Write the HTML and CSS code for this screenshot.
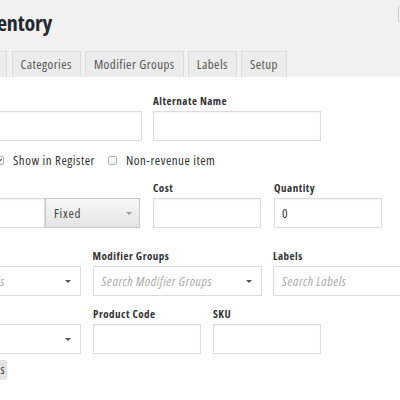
FILE: index.html
```html
<!DOCTYPE html>
<html>
<head>
<meta charset="utf-8">
<title>Inventory</title>
<link rel="stylesheet" href="styles.css">
</head>
<body>
<div class="page">
  <header class="head">
    <div class="head-row">
      <h1 class="title">Inventory</h1>
      <a class="head-btn">Add Item</a>
    </div>
    <nav class="tabs">
      <a class="tab tab-first">Details</a>
      <a class="tab">Categories</a>
      <a class="tab">Modifier Groups</a>
      <a class="tab">Labels</a>
      <a class="tab">Setup</a>
    </nav>
  </header>
  <main class="form">
    <div class="row row-name">
      <div class="field"><label class="lbl">Name</label><div class="input"></div></div>
      <div class="field"><label class="lbl">Alternate Name</label><div class="input"></div></div>
    </div>
    <div class="checks">
      <span class="check"><span class="box">
        <svg viewBox="0 0 10 10" width="9" height="9"><path d="M2 5.2 L4.2 7.3 L8 2.6" fill="none" stroke="#555" stroke-width="1.6"/></svg>
      </span>Show in Register</span>
      <span class="check"><span class="box"></span>Non-revenue item</span>
    </div>
    <div class="row row-price">
      <div class="field">
        <label class="lbl">Price</label>
        <div class="combo">
          <div class="input combo-input"></div>
          <div class="sel-fixed"><span>Fixed</span><span class="arrow arrow-light"></span></div>
        </div>
      </div>
      <div class="field"><label class="lbl">Cost</label><div class="input"></div></div>
      <div class="field"><label class="lbl">Quantity</label><div class="input value">0</div></div>
    </div>
    <div class="row row-groups">
      <div class="field"><label class="lbl">Categories</label><div class="sel"><span class="ph">Search Categories</span><span class="arrow"></span></div></div>
      <div class="field"><label class="lbl">Modifier Groups</label><div class="sel"><span class="ph">Search Modifier Groups</span><span class="arrow"></span></div></div>
      <div class="field"><label class="lbl">Labels</label><div class="sel"><span class="ph">Search Labels</span><span class="arrow"></span></div></div>
    </div>
    <div class="row row-codes">
      <div class="field"><label class="lbl">Tax</label><div class="sel"><span class="ph"></span><span class="arrow"></span></div></div>
      <div class="field"><label class="lbl">Product Code</label><div class="input"></div></div>
      <div class="field"><label class="lbl">SKU</label><div class="input"></div></div>
    </div>
    <div class="more">More Options</div>
  </main>
</div>
</body>
</html>
```
FILE: styles.css
```css
html, body {
  margin: 0;
  height: 400px;
  overflow: hidden;
  background: #fff;
}
body {
  font-family: "Open Sans", "DejaVu Sans", sans-serif;
  font-stretch: 75%;
  letter-spacing: 0.5px;
  color: #333;
}
.page {
  margin-left: -88px;
  width: 488px;
}
.head {
  background: #f1f1f1;
  padding: 8px 0 0 42px;
}
.head-row {
  display: flex;
  align-items: flex-start;
  padding-left: 17px;
}
.title {
  margin: 0;
  font-size: 22px;
  line-height: 28px;
  font-weight: 700;
  letter-spacing: -0.2px;
  color: #23282d;
}
.head-btn {
  margin-left: auto;
  margin-right: -58px;
  margin-top: -3px;
  width: 60px;
  height: 18px;
  box-sizing: border-box;
  border: 1px solid #c8c8c8;
  border-radius: 3px;
  background: #f7f7f7;
  font-size: 0;
}
.tabs {
  display: flex;
  margin-top: 15px;
  padding-left: 1px;
}
.tab {
  height: 26px;
  box-sizing: border-box;
  border: 1px solid #dcdcdc;
  border-bottom: 0;
  background: #ececec;
  padding: 0 8px;
  font-size: 13px;
  letter-spacing: 0.45px;
  line-height: 25px;
  color: #555;
  margin-right: 4px;
}
.tab-first {
  margin-right: 5px;
}
.form {
  padding-top: 17px;
}
.lbl {
  display: block;
  font-size: 11px;
  font-weight: 700;
  line-height: 13px;
  margin-bottom: 4px;
  color: #333;
}
.row {
  display: grid;
}
.input {
  height: 30px;
  box-sizing: border-box;
  border: 1px solid #dcdcdc;
  background: #fff;
  box-shadow: inset 0 1px 2px rgba(0, 0, 0, 0.05);
}
.value {
  padding-left: 7px;
  font-size: 13px;
  line-height: 28px;
  color: #333;
}
.row-name {
  grid-template-columns: 230px 168px;
  column-gap: 11px;
}
.checks {
  display: flex;
  align-items: center;
  height: 20px;
  margin-top: 9px;
  padding-left: 83px;
  gap: 13px;
  font-size: 13px;
  color: #333;
}
.check {
  display: flex;
  align-items: center;
  gap: 9px;
}
.box {
  width: 9px;
  height: 9px;
  box-sizing: border-box;
  border: 1px solid #b4b4b4;
  border-radius: 2px;
  background: linear-gradient(#fff, #ececec);
  display: flex;
  align-items: center;
  justify-content: center;
}
.box svg {
  display: block;
}
.row-price {
  margin-top: 11px;
  grid-template-columns: 228px 108px 108px;
  column-gap: 13px;
}
.combo {
  display: flex;
}
.combo-input {
  flex: 1;
}
.sel-fixed {
  width: 95px;
  height: 30px;
  box-sizing: border-box;
  border: 1px solid #c8c8c8;
  background: linear-gradient(#f8f8f8, #e3e3e3);
  padding: 0 7px 0 8px;
  display: flex;
  align-items: center;
  justify-content: space-between;
  font-size: 13px;
  letter-spacing: 0.7px;
  color: #444;
}
.arrow {
  width: 0;
  height: 0;
  border-left: 3px solid transparent;
  border-right: 3px solid transparent;
  border-top: 3px solid #555;
}
.arrow-light {
  border-top-color: #999;
}
.row-groups {
  margin-top: 21px;
  grid-template-columns: 169px 169px 169px;
  column-gap: 11.5px;
}
.sel {
  height: 30px;
  box-sizing: border-box;
  border: 1px solid #dcdcdc;
  background: #fff;
  padding: 0 9px 0 8px;
  display: flex;
  align-items: center;
  justify-content: space-between;
}
.ph {
  font-size: 13px;
  letter-spacing: 0.6px;
  font-style: italic;
  color: #aaa;
  white-space: nowrap;
}
.row-codes {
  margin-top: 11px;
  grid-template-columns: 169px 108px 108px;
  column-gap: 12px;
}
.more {
  margin-top: 6px;
  width: 95px;
  height: 20px;
  box-sizing: border-box;
  border-radius: 3px;
  background: #e3e3e3;
  font-size: 12px;
  line-height: 20px;
  text-align: right;
  padding-right: 2px;
  color: #333;
}
```
